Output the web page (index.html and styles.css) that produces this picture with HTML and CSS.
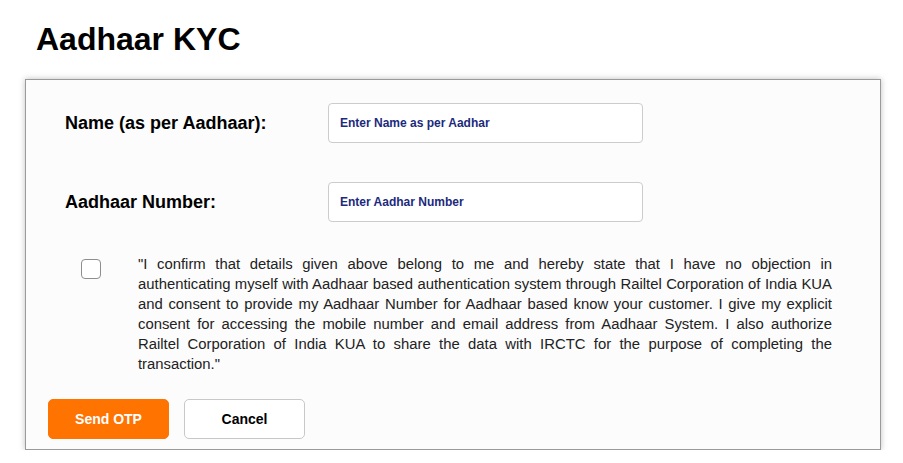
FILE: index.html
```html
<!DOCTYPE html>
<html lang="en">
<head>
    <meta charset="UTF-8">
    <meta name="viewport" content="width=device-width, initial-scale=1.0">
    <title>Aadhaar KYC</title>
    <link rel="stylesheet" href="styles.css">
</head>
<body>
    <h1 class="page-title">Aadhaar KYC</h1>

    <div class="kyc-card">
        <div class="form-row">
            <label class="form-label" for="aadhaarName">Name (as per Aadhaar):</label>
            <input class="form-input" type="text" id="aadhaarName" placeholder="Enter Name as per Aadhar">
        </div>

        <div class="form-row">
            <label class="form-label" for="aadhaarNumber">Aadhaar Number:</label>
            <input class="form-input" type="text" id="aadhaarNumber" placeholder="Enter Aadhar Number">
        </div>

        <div class="consent">
            <input class="consent-check" type="checkbox" id="consent">
            <p class="consent-text">"I confirm that details given above belong to me and hereby state that I have no objection in authenticating myself with Aadhaar based authentication system through Railtel Corporation of India KUA and consent to provide my Aadhaar Number for Aadhaar based know your customer. I give my explicit consent for accessing the mobile number and email address from Aadhaar System. I also authorize Railtel Corporation of India KUA to share the data with IRCTC for the purpose of completing the transaction."</p>
        </div>

        <div class="actions">
            <button class="btn btn-primary" type="button">Send OTP</button>
            <button class="btn btn-default" type="button">Cancel</button>
        </div>
    </div>
</body>
</html>
```

FILE: styles.css
```css
* {
    margin: 0;
    padding: 0;
    box-sizing: border-box;
}

body {
    font-family: "Liberation Sans", Arial, Helvetica, sans-serif;
    background: #ffffff;
    color: #000;
    padding: 20px 23px 0 25px;
}

.page-title {
    font-size: 32px;
    font-weight: bold;
    line-height: 38px;
    margin-left: 11px;
    margin-bottom: 21px;
}

.kyc-card {
    background: #fcfcfc;
    border: 1px solid #9a9a9a;
    box-shadow: 0 0 6px rgba(0, 0, 0, 0.25);
    padding: 23px 22px 10px 22px;
    width: 856px;
}

.form-row {
    display: flex;
    align-items: center;
    padding-left: 17px;
    margin-bottom: 39px;
}

.form-label {
    width: 263px;
    font-size: 18px;
    font-weight: bold;
}

.form-input {
    width: 315px;
    height: 40px;
    border: 1px solid #cccccc;
    border-radius: 4px;
    background: #fff;
    padding: 0 11px;
    font-family: inherit;
    font-size: 12px;
    font-weight: bold;
    color: #1b2a7d;
}

.form-input::placeholder {
    color: #1b2a7d;
    opacity: 1;
}

.consent {
    display: flex;
    align-items: flex-start;
    margin-top: -7px;
    padding-left: 33px;
}

.consent-check {
    appearance: none;
    -webkit-appearance: none;
    width: 20px;
    height: 20px;
    border: 1px solid #8e8e8e;
    border-radius: 4px;
    background: #fff;
    margin-top: 5px;
    margin-right: 37px;
    flex-shrink: 0;
}

.consent-text {
    width: 694px;
    font-size: 14.85px;
    line-height: 20px;
    text-align: justify;
    color: #222;
}

.actions {
    display: flex;
    gap: 15px;
    margin-top: 25px;
}

.btn {
    width: 121px;
    height: 40px;
    border-radius: 5px;
    font-family: inherit;
    font-size: 14px;
    font-weight: bold;
    cursor: pointer;
}

.btn-primary {
    background: #ff7300;
    border: 1px solid #ff7300;
    color: #fff;
}

.btn-default {
    background: #fff;
    border: 1px solid #c8c8c8;
    color: #000;
}
```
